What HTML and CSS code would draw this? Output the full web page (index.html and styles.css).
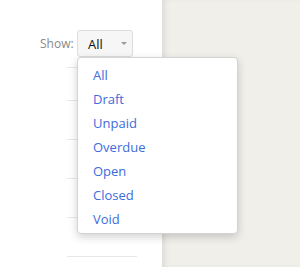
FILE: index.html
```html
<!DOCTYPE html>
<html lang="en">
<head>
    <meta charset="UTF-8">
    <title>Invoices filter</title>
    <link rel="stylesheet" href="styles.css">
</head>
<body>
    <div class="sidebar">
        <div class="filter">
            <span class="filter-label">Show:</span>
            <div class="select">
                <span>All</span>
                <span class="caret"></span>
            </div>
        </div>
        <div class="rows">
            <div class="row first"></div>
            <div class="row"></div>
            <div class="row"></div>
            <div class="row"></div>
            <div class="row"></div>
            <div class="row last"></div>
        </div>
        <ul class="dropdown">
            <li>All</li>
            <li>Draft</li>
            <li>Unpaid</li>
            <li>Overdue</li>
            <li>Open</li>
            <li>Closed</li>
            <li>Void</li>
        </ul>
    </div>
    <div class="content"></div>
</body>
</html>
```

FILE: styles.css
```css
* {
    margin: 0;
    padding: 0;
    box-sizing: border-box;
    font-family: 'Open Sans', 'Liberation Sans', sans-serif;
}

body {
    display: flex;
    height: 267px;
    overflow: hidden;
    background: #fff;
}

.sidebar {
    width: 162px;
    flex-shrink: 0;
    position: relative;
    padding-top: 30px;
}

.filter {
    display: flex;
    align-items: center;
    padding-left: 40px;
}

.filter-label {
    color: #8a8a8a;
    font-size: 12px;
    width: 37px;
}

.select {
    width: 56px;
    height: 27px;
    background: #f6f6f6;
    border: 1px solid #dcdcdc;
    border-radius: 3px;
    display: flex;
    align-items: center;
    padding-left: 10px;
    font-size: 13px;
    color: #111;
}

.caret {
    margin-left: 18px;
    width: 0;
    height: 0;
    border-left: 3px solid transparent;
    border-right: 3px solid transparent;
    border-top: 3px solid #999;
}

.rows {
    margin-left: 67px;
    margin-top: 10px;
}

.row {
    height: 39px;
    border-top: 1px solid #e8e8e8;
    width: 70px;
}

.row.first {
    height: 33px;
}

.row.last {
    height: 1px;
}

.dropdown {
    position: absolute;
    top: 57px;
    left: 77px;
    width: 161px;
    height: 177px;
    background: #fff;
    border: 1px solid #d4d4d4;
    border-radius: 4px;
    box-shadow: 0 3px 8px rgba(0, 0, 0, 0.18);
    list-style: none;
    padding-top: 7px;
    z-index: 10;
}

.dropdown li {
    font-size: 13px;
    color: #3d6cdb;
    height: 24px;
    line-height: 20px;
    padding-left: 15px;
}

.content {
    flex: 1;
    background: #f1efea;
    box-shadow: inset 5px 0 6px -3px rgba(0, 0, 0, 0.1);
}
```
